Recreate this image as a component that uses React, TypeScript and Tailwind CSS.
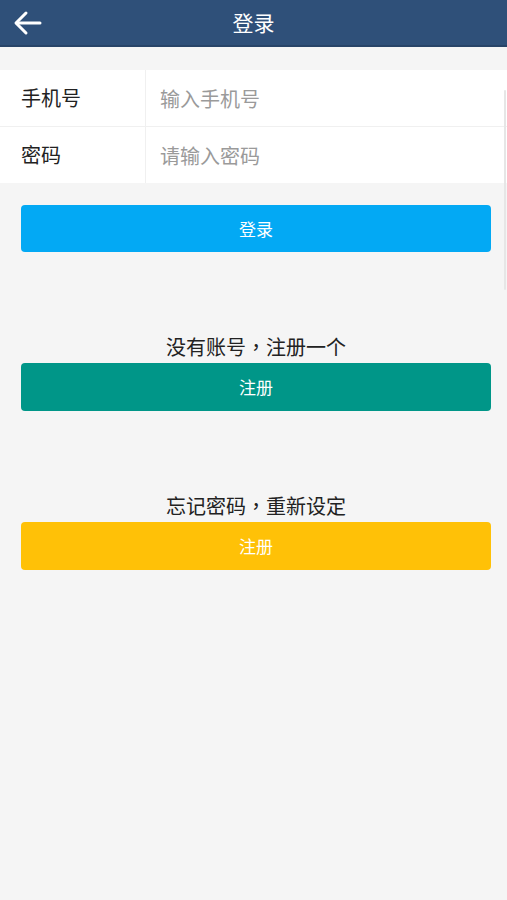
export default function App() {
  const font = { fontFamily: '"Noto Sans CJK SC", "Noto Sans", sans-serif' };
  // centred full-width comma, as on the device
  const comma = <span style={{ fontFamily: '"Noto Sans CJK TC", sans-serif' }}>，</span>;

  return (
    <div className="relative min-h-[900px] w-full bg-[#f5f5f5]" style={font}>
      {/* header */}
      <div className="relative flex h-[47px] items-center justify-center border-b-2 border-[#284468] bg-[#2f5079]">
        <button className="absolute left-[13px] top-[9px] text-white">
          <svg width="29" height="28" viewBox="0 0 29 28" fill="none" stroke="white" strokeWidth="3" strokeLinecap="round" strokeLinejoin="round">
            <path d="M27 14H4" />
            <path d="M13 4L3 14l10 10" />
          </svg>
        </button>
        <h1 className="text-[21px] leading-none text-white">登录</h1>
      </div>

      {/* form */}
      <div className="mt-[23px] bg-white">
        <div className="flex h-[57px] items-center border-b border-[#f0f0f0]">
          <div className="flex h-full w-[146px] items-center border-r border-[#f0f0f0] pl-[21px] text-[20px] text-[#222]">
            手机号
          </div>
          <input
            placeholder="输入手机号"
            className="h-full flex-1 bg-transparent pl-[14px] text-[20px] text-[#333] outline-none placeholder:text-[#9a9a9a]"
          />
        </div>
        <div className="flex h-[56px] items-center">
          <div className="flex h-full w-[146px] items-center border-r border-[#f0f0f0] pl-[21px] text-[20px] text-[#222]">
            密码
          </div>
          <input
            type="text"
            placeholder="请输入密码"
            className="h-full flex-1 bg-transparent pl-[14px] text-[20px] text-[#333] outline-none placeholder:text-[#9a9a9a]"
          />
        </div>
      </div>

      <div className="px-[21px] pr-[16px]">
        <button className="mt-[22px] flex h-[47px] w-full items-center justify-center rounded-[4px] bg-[#03a9f4] text-[17px] text-white">
          登录
        </button>

        <p className="mt-[82px] text-center text-[20px] leading-[26px] text-[#222]">没有账号{comma}注册一个</p>
        <button className="mt-[3px] flex h-[48px] w-full items-center justify-center rounded-[4px] bg-[#009688] text-[17px] text-white">
          注册
        </button>

        <p className="mt-[82px] text-center text-[20px] leading-[26px] text-[#222]">忘记密码{comma}重新设定</p>
        <button className="mt-[3px] flex h-[48px] w-full items-center justify-center rounded-[4px] bg-[#ffc107] text-[17px] text-white">
          注册
        </button>
      </div>

      {/* scroll indicator */}
      <div className="absolute right-[1px] top-[90px] h-[200px] w-[2px] rounded bg-[#e6e6e6]" />
    </div>
  );
}
